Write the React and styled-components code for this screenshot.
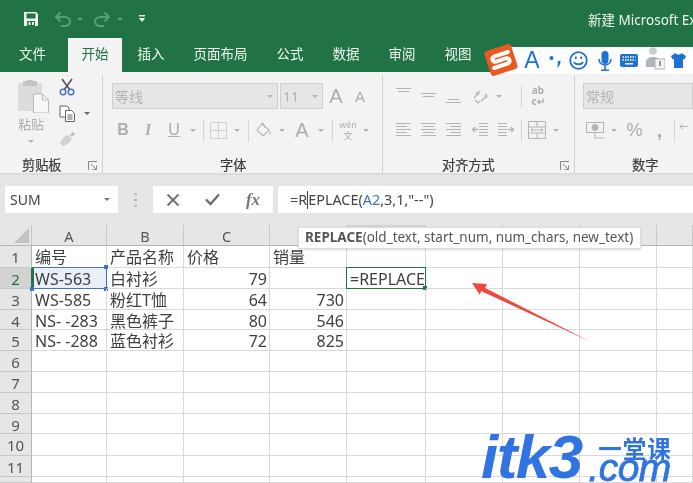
import React from "react";
import styled, { createGlobalStyle } from "styled-components";

const Global = createGlobalStyle`
  html, body { margin: 0; padding: 0; background: #fff; }
  #root { width: 693px; height: 483px; overflow: hidden; }
`;
const CJK = `"Noto Sans", "Noto Sans CJK SC", sans-serif`;

const Page = styled.div`
  position: relative; width: 693px; height: 483px; overflow: hidden;
  font-family: ${CJK}; background: #fff; filter: blur(0.35px);
  display: flex; flex-direction: column;
`;
const TitleBar = styled.div`
  height: 38px; flex: none; background: #217346; display: flex; align-items: center; padding-left: 22px;
`;
const Slot = styled.div`
  width: ${p => p.$w}px; flex: none; display: flex; align-items: center; justify-content: center;
  height: 100%;
`;
const Title = styled.div`
  margin-left: 440px; flex: none; color: #f0f5f2; font-size: 13.5px; white-space: nowrap;
`;
const TabBar = styled.div`
  height: 34px; flex: none; background: #217346; display: flex; gap: 2px; padding-left: 5.5px;
`;
const Tab = styled.div`
  padding: 0 13.5px; font-size: 13.5px; line-height: 33px; flex: none;
  margin-right: ${p => p.$mr || 0}px;
  color: ${p => (p.$active ? "#217346" : "#eef4f0")};
  background: ${p => (p.$active ? "#f3f3f3" : "transparent")};
`;
const Ribbon = styled.div`
  height: 103px; flex: none; background: #f3f3f3; display: flex; border-bottom: 2px solid #dcdcdc; box-sizing: border-box;
`;
const Group = styled.div`
  width: ${p => p.$w}px; flex: none; box-sizing: border-box; display: flex; flex-direction: column;
  border-right: ${p => (p.$last ? "none" : "1px solid #d2d2d2")};
  margin-top: 3px;
`;
const Body = styled.div`
  flex: 1; min-height: 0; padding: ${p => p.$t}px 0 0 ${p => p.$l}px; display: flex;
  flex-direction: ${p => p.$row ? "row" : "column"};
  gap: ${p => p.$gap || 0}px;
`;
const IconRow = styled.div`
  height: ${p => p.$h}px; display: flex; align-items: center; flex: none;
`;
const GroupLabel = styled.div`
  height: 16px; line-height: 16px; flex: none; display: flex; align-items: center; padding: 0 4px 0 ${p => p.$l}px;
  font-size: 13.2px; color: #3a3a3a; -webkit-text-stroke: 0.2px #3a3a3a;
`;
const LauncherBox = styled.span`
  margin-left: auto; display: flex; margin-top: 1px;
`;
const Select = styled.div`
  height: 26px; width: ${p => p.$w}px; flex: none; box-sizing: border-box; background: #e6e6e6;
  border: 1px solid #cfcfcf; margin-right: ${p => p.$mr || 0}px; display: flex; align-items: center;
  padding: 0 4px 0 2px; font-size: 14px; color: #b4b4b4; justify-content: space-between;
`;
const Caret = styled.span`
  width: 0; height: 0; flex: none; border-left: 3px solid transparent; border-right: 3px solid transparent;
  border-top: 3px solid ${p => p.$c || "#b4b4b4"};
`;
const VSep = styled.span`
  width: 1px; height: 23px; background: #d6d6d6; flex: none;
`;
const Glyph = styled.span`
  font-family: ${p => p.$serif ? `"Liberation Serif", serif` : `"Liberation Sans", sans-serif`};
  font-size: ${p => p.$s}px; font-weight: ${p => p.$b ? 700 : 400};
  font-style: ${p => p.$i ? "italic" : "normal"}; color: ${p => p.$c || "#adadad"};
  text-decoration: ${p => p.$u ? "underline" : "none"}; line-height: 1;
`;
const Stack = styled.div`
  display: flex; flex-direction: column; align-items: center; font-family: ${CJK}; color: #adadad;
  font-size: ${p => p.$s}px; line-height: ${p => p.$lh}px; font-weight: ${p => p.$b ? 700 : 400};
`;
const PasteCol = styled.div`
  width: 46px; margin-left: 8px; flex: none; display: flex; flex-direction: column; align-items: center;
`;
const PasteLabel = styled.div`
  font-size: 13px; color: #adadad; line-height: 18px; margin-top: 2px;
`;
const PasteCaret = styled.div` margin-top: 7px; display: flex; `;
const SmallCol = styled.div`
  margin: -2px 0 0 3px; display: flex; flex-direction: column; gap: 8px; flex: none;
`;
const SmallRow = styled.div` height: 18px; display: flex; align-items: center; gap: 3px; padding-left: 2px;`;

const FormulaArea = styled.div`
  height: 50px; flex: none; background: #e6e6e6; display: flex; align-items: flex-start; padding: 11px 0 0 5px; box-sizing: border-box;
`;
const NameBox = styled.div`
  width: 113px; height: 27px; flex: none; box-sizing: border-box; background: #fff; display: flex; align-items: center;
  justify-content: space-between; padding: 0 8px 0 5px; font-size: 14px; color: #444;
`;
const Grip = styled.div`
  width: 35px; height: 27px; flex: none; display: flex; align-items: center; justify-content: center;
`;
const FuncBox = styled.div`
  width: 120px; height: 27px; flex: none; background: #fff; display: flex;
`;
const FormulaBox = styled.div`
  margin-left: 5px; flex: 1; height: 27px; background: #fff; font-size: 14.4px; color: #444; line-height: 27px;
  padding-left: 12px; white-space: nowrap; overflow: hidden;
`;
const Cursor = styled.span`
  display: inline-block; width: 1px; height: 18px; background: #444; vertical-align: -4px;
`;
const RefText = styled.span` color: #3d72b8; `;

const Sheet = styled.div`
  flex: 1; min-height: 0; display: grid; overflow: hidden; background: #fff;
  grid-template-columns: 32px 75px 77px 86px 77px 79px 77px 77px 77px 36px;
  grid-template-rows: 21px 22px 21px 21px 20px 21px 21px 21px 21px 20px 22px 21px 6px;
`;
const Corner = styled.div`
  background: #e6e6e6; border-right: 1px solid #c6c6c6; border-bottom: 1px solid #b5b5b5; box-sizing: border-box;
  display: flex; align-items: flex-end; justify-content: flex-end; padding: 0 2px 2px 0;
`;
const ColHead = styled.div`
  background: ${p => p.$on ? "#d2d2d2" : "#e6e6e6"}; box-sizing: border-box; border-right: 1px solid #c6c6c6;
  border-bottom: 1px solid #b5b5b5; text-align: center; font-size: 14.5px; line-height: 23px; height: 21px; color: #555;
`;
const RowHead = styled.div`
  background: ${p => p.$on ? "#d2d2d2" : "#e6e6e6"}; box-sizing: border-box; border-right: 1px solid ${p => p.$on ? "#217346" : "#b5b5b5"};
  border-bottom: 1px solid #c6c6c6; text-align: center; font-size: 15px; line-height: 23px;
  color: ${p => p.$on ? "#217346" : "#555"}; overflow: hidden;
`;
const Cell = styled.div`
  position: relative; box-sizing: border-box; border-right: 1px solid #d9d9d9; border-bottom: 1px solid #d9d9d9;
  font-size: 16px; line-height: 23px; padding: 0 2px 0 3px; color: #404040; white-space: nowrap;
  text-align: ${p => p.$num ? "right" : "left"};
`;
const CopySel = styled(Cell)`
  background: #e9eff8;
`;
const CopyFrame = styled.span`
  position: absolute; left: 0; top: -1px; right: -1px; bottom: -1px; border: 1px solid #4472c4; border-left: 2px solid #217346;
`;
const Handle = styled.span`
  position: absolute; width: 4px; height: 4px; background: #4472c4;
  ${p => p.$h}: -2px; ${p => p.$v}: -3px;
`;
const EditCell = styled(Cell)`
  padding: 0 3px; overflow: visible; background: #fff;
`;
const EditFrame = styled.span`
  position: absolute; left: -1px; top: -1px; right: -1px; bottom: -1px; border: 1px solid #217346;
`;
const GreenDot = styled.span`
  position: absolute; right: -2px; bottom: -2px; width: 4px; height: 4px; background: #217346;
`;
const Tooltip = styled.div`
  position: absolute; left: 298px; top: 227px; width: 343px; height: 22px; box-sizing: border-box; background: #fff;
  border: 1px solid #dedede; box-shadow: 0 1px 2px rgba(0,0,0,.15); font-size: 13.5px; color: #555;
  line-height: 19px; padding-left: 6px; white-space: nowrap;
`;
const TipName = styled.b` font-weight: 700; `;
const ImeBar = styled.div`
  position: absolute; left: 500px; top: 47px; width: 193px; height: 27px; background: #fff; display: flex; align-items: center;
`;
const Logo = styled.svg`
  position: absolute; left: 483px; top: 43px;
`;
const ArrowSvg = styled.svg`
  position: absolute; left: 465px; top: 278px;
`;
const Watermark = styled.div`
  position: absolute; left: 481px; top: 422px; display: flex; color: #2f74e0; font-family: "Liberation Sans", sans-serif;
`;
const Brand = styled.div`
  font-size: 62px; font-weight: 700; font-style: italic; line-height: 70px; letter-spacing: -1.5px;
`;
const BrandSide = styled.div`
  margin-left: 5px; display: flex; flex-direction: column; align-items: flex-end; width: 85px;
`;
const BrandCn = styled.div`
  font-family: "Noto Sans CJK SC", sans-serif; font-size: 23.5px; font-weight: 700; line-height: 26px; margin-top: 13px; letter-spacing: 1px;
`;
const BrandCom = styled.div`
  font-size: 39px; font-weight: 400; font-style: italic; line-height: 14px; -webkit-text-stroke: 0.8px #2f74e0; margin-right: 1px; letter-spacing: -0.5px; white-space: nowrap;
`;

const G = "#b4b4b4";
const Lines = ({ l, c = G }) => (
  <svg width="18" height="18" viewBox="0 0 18 18" stroke={c} strokeWidth="1">
    {l.map(([a, b, y], i) => <line key={i} x1={a} x2={b} y1={y + .5} y2={y + .5} />)}
  </svg>
);
const full = [[1, 16, 2], [1, 12, 5], [1, 16, 8], [1, 12, 11], [1, 16, 14]];
const center = [[1, 16, 2], [3, 14, 5], [1, 16, 8], [3, 14, 11], [1, 16, 14]];
const right = [[1, 16, 2], [5, 16, 5], [1, 16, 8], [5, 16, 11], [1, 16, 14]];
const topA = [[1, 16, 1], [3, 14, 4]];
const midA = [[1, 16, 6], [3, 14, 9]];
const botA = [[3, 14, 12], [1, 16, 15]];

const Save = () => (
  <svg width="16" height="16" viewBox="0 0 16 16">
    <path d="M1 1h12l2 2v12H1z" fill="#f2f6f3" />
    <rect x="3.5" y="2.5" width="9" height="5" fill="#217346" />
    <rect x="4" y="10" width="8" height="5" fill="#217346" />
    <rect x="5.5" y="11" width="2" height="3" fill="#f2f6f3" />
    <rect x="9" y="11" width="2" height="3" fill="#f2f6f3" />
  </svg>
);
const Undo = ({ flip }) => (
  <svg width="18" height="16" viewBox="0 0 18 16" fill="none" stroke="#55a077" strokeWidth="2" style={flip ? { transform: "scaleX(-1)" } : undefined}>
    <path d="M2 6h9a5 4.5 0 0 1 0 9H7" />
    <path d="M6.5 1.5L2 6l4.5 4.5" />
  </svg>
);
const QatMore = () => (
  <svg width="8" height="8" viewBox="0 0 8 8" fill="#eef4f0"><rect x="1" y="0" width="6" height="1.4" /><path d="M.8 3h6.4L4 7z" /></svg>
);
const PasteIcon = () => (
  <svg width="32" height="33" viewBox="0 0 32 33" style={{ marginLeft: 5 }}>
    <rect x="0" y="3" width="24" height="28" fill="#dcdcdc" />
    <rect x="5" y="1" width="14" height="5" fill="#c4c4c4" />
    <rect x="9" y="0" width="6" height="3" fill="#c4c4c4" />
    <path d="M15.5 14h9l6 6v13h-15z" fill="#f7f7f7" stroke="#b9b9b9" />
    <path d="M24.5 14v6h6" fill="none" stroke="#b9b9b9" />
  </svg>
);
const Scissors = () => (
  <svg width="16" height="18" viewBox="0 0 16 18" fill="none">
    <path d="M3 1l8 11M13 1L5 12" stroke="#555" strokeWidth="1.6" />
    <circle cx="4" cy="14" r="2.8" stroke="#4472c4" strokeWidth="1.4" />
    <circle cx="12" cy="14" r="2.8" stroke="#4472c4" strokeWidth="1.4" />
  </svg>
);
const CopyIcon = () => (
  <svg width="17" height="17" viewBox="0 0 17 17" fill="#fff" stroke="#666">
    <path d="M1 1h7l2 2v9H1z" />
    <path d="M6.5 5.5h6l3 3v8h-9z" />
    <path d="M8.5 10h5M8.5 12h5M8.5 14h5" />
  </svg>
);
const Brush = () => (
  <svg width="17" height="17" viewBox="0 0 17 17">
    <path d="M9 4l4 4-3 4-6 3-3-3 4-6z" fill="#d0d0d0" />
    <path d="M11 4l3-3 2 2-3 3z" fill="#bdbdbd" />
  </svg>
);
const Launcher = () => (
  <svg width="10" height="10" viewBox="0 0 10 10" fill="none" stroke="#8b8b8b">
    <path d="M.5 9V.5H9" /><path d="M3 3l5.5 5.5M8.5 4.5v4h-4" />
  </svg>
);
const BorderIcon = () => (
  <svg width="17" height="17" viewBox="0 0 17 17" fill="none" stroke="#cfcfcf"><path d="M.5.5h16v16H.5zM8.5.5v16M.5 8.5h16" /></svg>
);
const Fill = () => (
  <svg width="16" height="16" viewBox="0 0 16 16" fill="none" stroke={G} strokeWidth="1.1">
    <path d="M6 2L1 8l6 6 6-6z" /><path d="M6 2c0-1 1-1 2 1l1.5 3" /><path d="M13 9c1.5 2 1.5 3 .7 3.5" />
  </svg>
);
const Orient = () => (
  <svg width="17" height="16" viewBox="0 0 17 16" fill="none" stroke={G} strokeWidth="1.2">
    <path d="M2 10l6-7M4 4l3 3M3 12l3 3 2-2" /><path d="M9 13l6-5" /><path d="M13 6l2 2-2 2" />
  </svg>
);
const Indent = ({ rev }) => (
  <svg width="17" height="16" viewBox="0 0 17 16" stroke={G} fill="none" style={rev ? { transform: "scaleX(-1)" } : undefined}>
    <path d="M7 1.5h9M7 4.5h9M7 7.5h9M7 10.5h9M7 13.5h9" />
    <path d="M1 7.5h5M3 5l-2.500 2.500L3 10" strokeWidth="1.5" />
  </svg>
);
const Merge = () => (
  <svg width="18" height="18" viewBox="0 0 18 18" fill="none" stroke={G}>
    <path d="M.5.500h17v17H.5zM.5 6h17M.5 12h17M9 .5V6M9 12v5.500" />
    <path d="M3 9h12M5 7.500L3 9l2 1.500M13 7.500L15 9l-2 1.500" />
  </svg>
);
const Currency = () => (
  <svg width="19" height="17" viewBox="0 0 19 17" fill="none" stroke={G}>
    <rect x=".5" y=".5" width="17" height="10" /><circle cx="9" cy="5.500" r="3" fill={G} />
    <path d="M9 11v5h9" stroke="#d4d4d4" strokeWidth="2" />
  </svg>
);
const DecIcon = () => (
  <svg width="14" height="14" viewBox="0 0 14 14" fill="none" stroke={G}><path d="M1 3.500h8M4 1L1 3.500 4 6" /></svg>
);
const FxX = () => (
  <svg width="14" height="14" viewBox="0 0 14 14" stroke="#6e6e6e" strokeWidth="1.8"><path d="M1.500 1.500l11 11M12.500 1.500l-11 11" /></svg>
);
const FxCheck = () => (
  <svg width="15" height="13" viewBox="0 0 15 13" fill="none" stroke="#6e6e6e" strokeWidth="2.400"><path d="M1 6.500l4.500 4.500L14 1.500" /></svg>
);
const Dots = () => (
  <svg width="3" height="14" viewBox="0 0 3 14" fill="#b9b9b9"><rect width="3" height="2" /><rect y="6" width="3" height="2" /><rect y="12" width="3" height="2" /></svg>
);
const CornerTri = () => (
  <svg width="15" height="15" viewBox="0 0 15 15"><path d="M15 0v15H0z" fill="#c2c2c2" /></svg>
);

const B = "#1e72cf";
const Punct = () => (
  <svg width="12" height="14" viewBox="0 0 12 14" fill={B}><circle cx="2.500" cy="4" r="2" /><path d="M8.500 7h3c0 3-1 5.500-3.500 6.500C9 11 9 9.500 8.500 7z" /></svg>
);
const Smile = () => (
  <svg width="19" height="19" viewBox="0 0 19 19" fill="none" stroke={B} strokeWidth="1.800">
    <circle cx="9.500" cy="9.500" r="8.300" /><path d="M5 11c1 3 8 3 9 0" />
    <path d="M6.800 5.500v2.500M12.200 5.500v2.500" />
  </svg>
);
const Mic = () => (
  <svg width="14" height="20" viewBox="0 0 14 20" fill="none" stroke={B} strokeWidth="1.600">
    <rect x="3.500" y="0" width="7" height="13" rx="3.500" fill={B} stroke="none" />
    <path d="M1 8c0 8 12 8 12 0M7 14v5M3 19.200h8" />
  </svg>
);
const Keyboard = () => (
  <svg width="18" height="13" viewBox="0 0 18 13">
    <rect width="18" height="13" rx="2" fill={B} />
    <path d="M2.500 3h13M2.500 6h13" stroke="#fff" strokeWidth="1.300" strokeDasharray="1.500 1" />
    <path d="M5 9.800h8" stroke="#fff" strokeWidth="1.400" />
  </svg>
);
const UserIme = () => (
  <svg width="19" height="24" viewBox="0 0 19 24" style={{ marginTop: -6 }}>
    <circle cx="7" cy="5" r="3.800" fill="#c8ccd0" />
    <path d="M0 21v-5c0-3 3-5 7-5s7 2 7 5v5z" fill="#aeb5bc" />
    <rect x="9" y="13" width="10" height="10" fill="#f3f3f3" stroke="#aeb5bc" />
    <path d="M14 15v5" stroke="#70787f" strokeWidth="1.500" />
  </svg>
);
const Shirt = () => (
  <svg width="15" height="15" viewBox="0 0 15 15"><path d="M4.500 0C5.500 2 9.500 2 10.500 0L15 3l-1.500 3.500-1.500-.7V15H3V5.800l-1.500.7L0 3z" fill={B} /></svg>
);

const columns = ["A", "B", "C", "", "", "", "", "", ""];
const activeCol = 4;
const data = [
  ["编号", "产品名称", "价格", "销量"],
  ["WS-563", "白衬衫", "79", ""],
  ["WS-585", "粉红T恤", "64", "730"],
  ["NS- -283", "黑色裤子", "80", "546"],
  ["NS- -288", "蓝色衬衫", "72", "825"],
];

const Row = ({ n }) => {
  const r = data[n - 1] || [];
  return (
    <>
      <RowHead $on={n === 2}>{n < 12 ? n : ""}</RowHead>
      {columns.map((_, i) => {
        const v = r[i] || "";
        const num = /^\d+$/.test(v);
        if (n === 2 && i === 0) return (
          <CopySel key={i}>{v}<CopyFrame /><Handle $h="right" $v="top" /><Handle $h="left" $v="bottom" /><Handle $h="right" $v="bottom" /></CopySel>
        );
        if (n === 2 && i === 4) return (
          <EditCell key={i}>=REPLACE<EditFrame /><GreenDot /></EditCell>
        );
        return <Cell key={i} $num={num}>{v}</Cell>;
      })}
    </>
  );
};

export default function App() {
  return (
    <Page>
      <Global />
      <TitleBar>
        <Slot $w={18}><Save /></Slot>
        <Slot $w={12} />
        <Slot $w={22}><Undo /></Slot>
        <Slot $w={12}><Caret $c="#55a077" /></Slot>
        <Slot $w={5} />
        <Slot $w={22}><Undo flip /></Slot>
        <Slot $w={14}><Caret $c="#55a077" /></Slot>
        <Slot $w={9} />
        <Slot $w={12}><QatMore /></Slot>
        <Title>新建 Microsoft Excel</Title>
      </TitleBar>
      <TabBar>
        <Tab $mr={6.5}>文件</Tab>
        <Tab $active>开始</Tab>
        <Tab>插入</Tab>
        <Tab>页面布局</Tab>
        <Tab>公式</Tab>
        <Tab>数据</Tab>
        <Tab>审阅</Tab>
        <Tab>视图</Tab>
      </TabBar>
      <Ribbon>
        <Group $w={103}>
          <Body $t={5} $l={0} $row>
            <PasteCol>
              <PasteIcon />
              <PasteLabel>粘贴</PasteLabel>
              <PasteCaret><Caret /></PasteCaret>
            </PasteCol>
            <SmallCol>
              <SmallRow><Scissors /></SmallRow>
              <SmallRow><CopyIcon /><Slot $w={16}><Caret $c="#666" /></Slot></SmallRow>
              <SmallRow><Brush /></SmallRow>
            </SmallCol>
          </Body>
          <GroupLabel $l={22}>剪贴板<LauncherBox><Launcher /></LauncherBox></GroupLabel>
        </Group>
        <Group $w={280}>
          <Body $t={8} $l={9} $gap={9}>
            <IconRow $h={26}>
              <Select $w={166} $mr={2}>等线<Caret /></Select>
              <Select $w={43}>11<Caret /></Select>
              <Slot $w={26}><Glyph $s={20}>A</Glyph></Slot>
              <Slot $w={22}><Glyph $s={15}>A</Glyph></Slot>
            </IconRow>
            <IconRow $h={24}>
              <Slot $w={22}><Glyph $s={16} $b>B</Glyph></Slot>
              <Slot $w={28}><Glyph $s={16} $b $i $serif>I</Glyph></Slot>
              <Slot $w={24}><Glyph $s={16} $u>U</Glyph></Slot>
              <Slot $w={14}><Caret /></Slot>
              <Slot $w={6}><VSep /></Slot>
              <Slot $w={24}><BorderIcon /></Slot>
              <Slot $w={14}><Caret /></Slot>
              <Slot $w={8}><VSep /></Slot>
              <Slot $w={24}><Fill /></Slot>
              <Slot $w={12}><Caret /></Slot>
              <Slot $w={28}><Glyph $s={20}>A</Glyph></Slot>
              <Slot $w={10}><Caret /></Slot>
              <Slot $w={12}><VSep /></Slot>
              <Slot $w={20}><Stack $s={9} $lh={11}><span>wén</span><span>文</span></Stack></Slot>
              <Slot $w={16}><Caret /></Slot>
            </IconRow>
          </Body>
          <GroupLabel $l={117}>字体</GroupLabel>
        </Group>
        <Group $w={192}>
          <Body $t={8} $l={8} $gap={9}>
            <IconRow $h={26}>
              <Slot $w={25}><Lines l={topA} /></Slot>
              <Slot $w={25}><Lines l={midA} /></Slot>
              <Slot $w={26}><Lines l={botA} /></Slot>
              <Slot $w={27}><Orient /></Slot>
              <Slot $w={9}><Caret /></Slot>
              <Slot $w={18} />
              <VSep />
              <Slot $w={32}><Stack $s={10} $lh={11} $b><span>ab</span><span>c↵</span></Stack></Slot>
            </IconRow>
            <IconRow $h={24}>
              <Slot $w={25}><Lines l={full} /></Slot>
              <Slot $w={25}><Lines l={center} /></Slot>
              <Slot $w={26}><Lines l={right} /></Slot>
              <Slot $w={26}><Indent /></Slot>
              <Slot $w={24}><Indent rev /></Slot>
              <Slot $w={4} />
              <VSep />
              <Slot $w={29}><Merge /></Slot>
              <Slot $w={10}><Caret /></Slot>
            </IconRow>
          </Body>
          <GroupLabel $l={59}>对齐方式<LauncherBox><Launcher /></LauncherBox></GroupLabel>
        </Group>
        <Group $w={118} $last>
          <Body $t={8} $l={8} $gap={9}>
            <IconRow $h={26}><Select $w={110}>常规</Select></IconRow>
            <IconRow $h={24}>
              <Slot $w={24}><Currency /></Slot>
              <Slot $w={13}><Caret /></Slot>
              <Slot $w={29}><Glyph $s={18}>%</Glyph></Slot>
              <Slot $w={21}><Glyph $s={20} $b>,</Glyph></Slot>
              <Slot $w={8}><VSep /></Slot>
              <Slot $w={15}><DecIcon /></Slot>
            </IconRow>
          </Body>
          <GroupLabel $l={57}>数字</GroupLabel>
        </Group>
      </Ribbon>
      <FormulaArea>
        <NameBox>SUM<Caret $c="#777" /></NameBox>
        <Grip><Dots /></Grip>
        <FuncBox>
          <Slot $w={39}><FxX /></Slot>
          <Slot $w={41}><FxCheck /></Slot>
          <Slot $w={40}><Glyph $s={17} $i $b $serif $c="#777">fx</Glyph></Slot>
        </FuncBox>
        <FormulaBox>=R<Cursor />EPLACE(<RefText>A2</RefText>,3,1,"--")</FormulaBox>
      </FormulaArea>
      <Sheet>
        <Corner><CornerTri /></Corner>
        {columns.map((c, i) => <ColHead key={i} $on={i === activeCol}>{c}</ColHead>)}
        {Array.from({ length: 12 }, (_, i) => <Row key={i} n={i + 1} />)}
      </Sheet>
      <Tooltip><TipName>REPLACE</TipName>(old_text, start_num, num_chars, new_text)</Tooltip>
      <ImeBar>
        <Slot $w={24} />
        <Slot $w={16}><Glyph $s={23} $c={B}>A</Glyph></Slot>
        <Slot $w={29}><Punct /></Slot>
        <Slot $w={19}><Smile /></Slot>
        <Slot $w={10} />
        <Slot $w={14}><Mic /></Slot>
        <Slot $w={8} />
        <Slot $w={18}><Keyboard /></Slot>
        <Slot $w={8} />
        <Slot $w={19}><UserIme /></Slot>
        <Slot $w={6} />
        <Slot $w={15}><Shirt /></Slot>
      </ImeBar>
      <Logo width="36" height="34" viewBox="0 0 36 34">
        <g transform="rotate(-18 18 17)">
          <rect x="4" y="4" width="28" height="26" rx="3" fill="#ea5a1e" />
          <path d="M27 11.500H13c-4 0-4 5.500 0 5.500h10c4 0 4 5.500 0 5.500H9" fill="none" stroke="#fff" strokeWidth="4" strokeLinecap="round" />
        </g>
      </Logo>
      <ArrowSvg width="130" height="70" viewBox="465 278 130 70">
        <path d="M472 283L487 284L485 288L591 342L481 291L480 295z" fill="#f0453c" />
      </ArrowSvg>
      <Watermark>
        <Brand>itk3</Brand>
        <BrandSide>
          <BrandCn>一堂课</BrandCn>
          <BrandCom>.com</BrandCom>
        </BrandSide>
      </Watermark>
    </Page>
  );
}
